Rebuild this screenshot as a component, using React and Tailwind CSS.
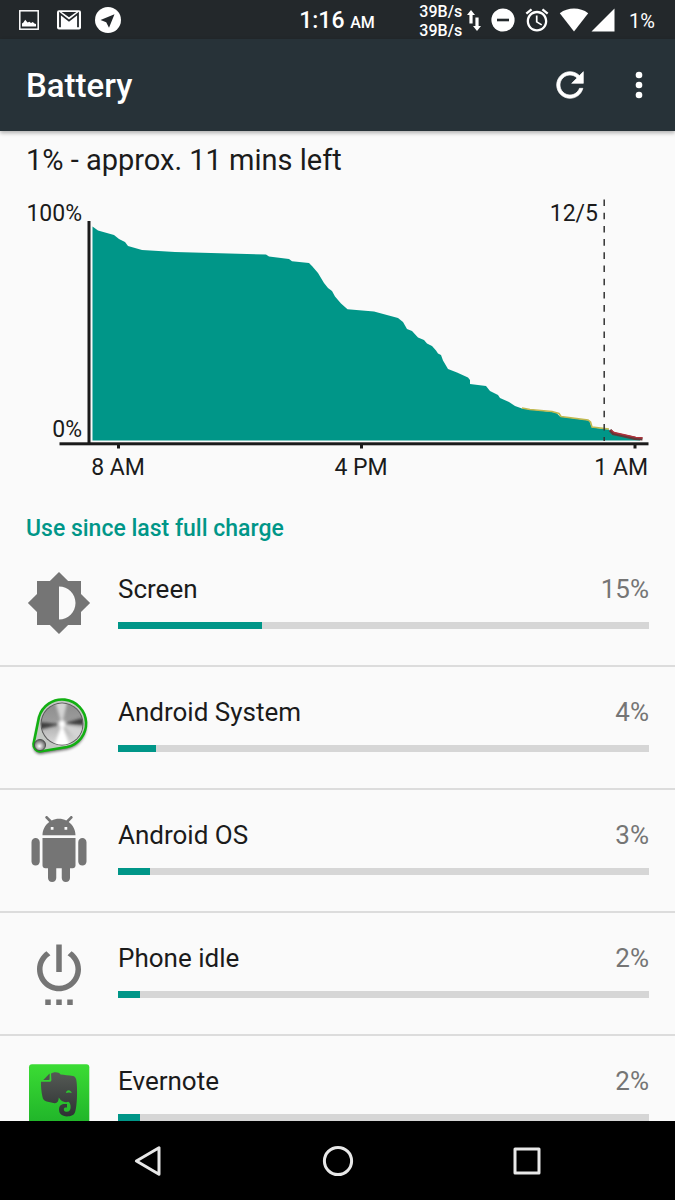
import React from "react";

function ImageIcon() {
  return (
    <svg viewBox="0 0 20 20" className="size-5" aria-hidden="true">
      <rect x="0.8" y="0.8" width="18.4" height="18.4" fill="none" stroke="#fff" strokeWidth="1.5" />
      <path d="M3 16.6V13.4L4.4 12.6L6.2 9.8L8.6 12.6L10.4 11.8L12 13L13.8 12L15.4 13.4L17 14V16.6Z" fill="#fff" />
    </svg>
  );
}

function MailIcon() {
  return (
    <svg viewBox="0 0 24 20" className="h-5 w-6" aria-hidden="true">
      <rect x="0" y="0.3" width="24" height="19.2" rx="2" fill="#fff" />
      <path d="M3 17.2V3.6L12 10.6L21 3.6V17.2" fill="none" stroke="#23282b" strokeWidth="1.8" />
      <path d="M4.6 2H19.4L12 7.2Z" fill="#23282b" />
    </svg>
  );
}

function CompassIcon() {
  return (
    <svg viewBox="0 0 26 26" className="size-[26px]" aria-hidden="true">
      <circle cx="13" cy="13" r="13" fill="#fff" />
      <path d="M19.5 7.2L5.5 13L11.2 15.2L14 20.8Z" fill="#23282b" />
    </svg>
  );
}

function StatusBar() {
  return (
    <header className="grid h-[39px] shrink-0 grid-cols-[1fr_auto_1fr] items-center bg-[#23282b] pl-[19px] pr-5 text-white">
      <div className="flex items-center">
        <ImageIcon />
        <span className="ml-[18px]"><MailIcon /></span>
        <span className="ml-[14px]"><CompassIcon /></span>
      </div>
      <p className="whitespace-nowrap pt-[2px] text-[23px] font-medium leading-9">
        1:16 <span className="text-base">AM</span>
      </p>
      <div className="flex items-center justify-end">
        <p className="pt-[2px] text-base font-medium leading-[19px]">
          39B/s
          <br />
          39B/s
        </p>
        <svg viewBox="0 0 14 21" className="ml-[5px] h-[21px] w-[14px]" fill="#fff" aria-hidden="true">
          <path d="M4 0L8 5H5.6V13.5H2.4V5H0Z" />
          <path d="M10 21L6 16H8.4V7.5H11.6V16H14Z" />
        </svg>
        <svg viewBox="0 0 24 24" className="ml-[10px] size-6" aria-hidden="true">
          <circle cx="12" cy="12" r="11.6" fill="#fff" />
          <rect x="6" y="10.7" width="12" height="2.6" fill="#23282b" />
        </svg>
        <svg viewBox="1.5 1.5 21 21" className="ml-[10px] size-6" fill="#fff" aria-hidden="true">
          <path d="M22 5.72l-4.6-3.86-1.29 1.53 4.6 3.86L22 5.72zM7.88 3.39L6.6 1.86 2 5.71l1.29 1.53 4.59-3.85zM12.5 8H11v6l4.75 2.85.75-1.23-4-2.37V8zM12 4c-4.97 0-9 4.03-9 9s4.02 9 9 9c4.97 0 9-4.03 9-9s-4.03-9-9-9zm0 16c-3.87 0-7-3.13-7-7s3.13-7 7-7 7 3.13 7 7-3.13 7-7 7z" />
        </svg>
        <svg viewBox="0 0 30 24" className="ml-[10px] h-6 w-[30px]" fill="#fff" aria-hidden="true">
          <path d="M15 23.5L0.8 5.2C5 2 9.8 0.5 15 0.5S25 2 29.2 5.2Z" />
        </svg>
        <svg viewBox="0 0 24 24" className="ml-[2px] size-6" fill="#fff" aria-hidden="true">
          <path d="M23.5 0.5V23.5H0.5Z" />
        </svg>
        <span className="ml-[14px] pt-[2px] text-[20px] leading-6">1%</span>
      </div>
    </header>
  );
}

function AppBar() {
  return (
    <div className="z-10 flex h-[92px] shrink-0 items-center bg-[#273238] pl-[26px] pr-4 text-white shadow-[0_2px_4px_rgba(0,0,0,0.3)]">
      <h1 className="flex-1 pt-[2px] text-[33px] font-medium leading-10">Battery</h1>
      <button type="button" aria-label="Refresh" className="mr-[29px]">
        <svg viewBox="0 0 24 24" className="size-[40px]" fill="#fff" stroke="#fff" strokeWidth="0.4" aria-hidden="true">
          <path d="M17.65 6.35C16.2 4.9 14.21 4 12 4c-4.42 0-7.99 3.58-7.99 8s3.57 8 7.99 8c3.73 0 6.84-2.55 7.73-6h-2.08c-.82 2.33-3.04 4-5.65 4-3.31 0-6-2.69-6-6s2.69-6 6-6c1.66 0 3.14.69 4.22 1.78L13 11h7V4l-2.35 2.35z" />
        </svg>
      </button>
      <button type="button" aria-label="More options">
        <svg viewBox="0 0 24 24" className="size-[40px]" fill="#fff" aria-hidden="true">
          <circle cx="12" cy="6" r="2" />
          <circle cx="12" cy="12" r="2" />
          <circle cx="12" cy="18" r="2" />
        </svg>
      </button>
    </div>
  );
}

function BatteryChart() {
  return (
    <svg
      viewBox="0 0 675 300"
      className="block w-full text-[23px]"
      fill="#1b1b1b"
      role="img"
      aria-label="Battery level over time"
    >
      <path
        fill="#009688"
        d="M92.5 36.5L98 40.5L114 45L119 49L125 52L128 56L135 58L142 60L175 62L266 64.5L269 66.5L289 69L292 71.3L309 73L312 76L318 83L324 93L328 98L332 101L335 106.5L341 113.5L347.5 119.3L374 121.5L398 128L403 132L407 139L412 141L418 147.5L424 150L427 153.5L432 156L436 160.5L438 163.5L441 165L443 170.5L448 179L457 182.5L468 187.5L470 190V194L486 196L490 201L498 205L500 208L509 212L515 216L522 218.5L556 222.5L560 226.5L589 230.5L592 237.5L609 239.5L612 244.5L640 248.5V250.5H92.5Z"
      />
      <path
        fill="none"
        stroke="#c0b84f"
        strokeWidth="1.6"
        d="M522 218L530 219.5L552 221.5L559 223.5L561 226.5L588 230L590.5 232L592 237L609 239"
      />
      <path fill="none" stroke="#5f3a3a" strokeWidth="3.2" d="M610 240L613 243.5L622 245.5L635 248.3L642.5 248.8" />
      <path fill="none" stroke="#b0303a" strokeWidth="1.4" d="M611 240L614 242.5L624 244.8L636 247.4L642.5 248" />
      <path stroke="#333" strokeWidth="1.5" strokeDasharray="6.6 6.6" d="M604.2 9.5V251" />
      <rect x="87.5" y="31" width="3" height="222" />
      <rect x="59.5" y="252.3" width="589" height="3" />
      <rect x="117" y="254" width="3" height="4.5" />
      <rect x="360" y="254" width="3" height="4.5" />
      <rect x="633.5" y="254" width="3" height="4.5" />
      <text x="82" y="31" textAnchor="end">100%</text>
      <text x="82" y="247" textAnchor="end">0%</text>
      <text x="598" y="31" textAnchor="end">12/5</text>
      <text x="118" y="285" textAnchor="middle">8 AM</text>
      <text x="361" y="285" textAnchor="middle">4 PM</text>
      <text x="648" y="285" textAnchor="end">1 AM</text>
    </svg>
  );
}

function MaterialIcon({ d }) {
  return (
    <svg viewBox="0 0 24 24" className="size-[66px]" fill="#757575" aria-hidden="true">
      <path d={d} />
    </svg>
  );
}

const BRIGHTNESS =
  "M20 15.31L23.31 12 20 8.69V4h-4.69L12 .69 8.69 4H4v4.69L.69 12 4 15.31V20h4.69L12 23.31 15.31 20H20v-4.69zM12 18V6c3.31 0 6 2.69 6 6s-2.69 6-6 6z";
const ANDROID =
  "M6 18c0 .55.45 1 1 1h1v3.5c0 .83.67 1.5 1.5 1.5s1.5-.67 1.5-1.5V19h2v3.5c0 .83.67 1.5 1.5 1.5s1.5-.67 1.5-1.5V19h1c.55 0 1-.45 1-1V8H6v10zM3.5 8C2.67 8 2 8.67 2 9.5v7c0 .83.67 1.5 1.5 1.5S5 17.33 5 16.5v-7C5 8.67 4.33 8 3.5 8zm17 0c-.83 0-1.5.67-1.5 1.5v7c0 .83.67 1.5 1.5 1.5s1.5-.67 1.5-1.5v-7c0-.83-.67-1.5-1.5-1.5zm-4.97-5.84l1.3-1.3c.2-.2.2-.51 0-.71-.2-.2-.51-.2-.71 0l-1.48 1.48C13.85 1.23 12.95 1 12 1c-.96 0-1.86.23-2.66.63L7.85.15c-.2-.2-.51-.2-.71 0-.2.2-.2.51 0 .71l1.31 1.31C6.97 3.26 6 5.01 6 7h12c0-1.99-.97-3.75-2.47-4.84zM10 5H9V4h1v1zm5 0h-1V4h1v1z";
const POWER =
  "M7 24h2v-2H7v2zm4 0h2v-2h-2v2zm2-22h-2v10h2V2zm3.56 2.44l-1.45 1.45C16.84 6.94 18 8.83 18 11c0 3.31-2.69 6-6 6s-6-2.69-6-6c0-2.17 1.16-4.06 2.88-5.12L7.44 4.44C5.36 5.88 4 8.28 4 11c0 4.42 3.58 8 8 8s8-3.58 8-8c0-2.72-1.36-5.12-3.44-6.56zM15 24h2v-2h-2v2z";

function KnobIcon() {
  return (
    <svg viewBox="0 0 66 66" className="size-[66px]" aria-hidden="true">
      <defs>
        <filter id="soft" x="-30%" y="-30%" width="160%" height="160%">
          <feGaussianBlur stdDeviation="1.8" />
        </filter>
        <clipPath id="disc">
          <circle cx="36" cy="31" r="20.5" />
        </clipPath>
        <linearGradient id="metal" x1="0" y1="0" x2="0" y2="1">
          <stop offset="0" stopColor="#8c8c8c" />
          <stop offset="0.4" stopColor="#9a9a9a" />
          <stop offset="0.6" stopColor="#b8b8b8" />
          <stop offset="1" stopColor="#dedede" />
        </linearGradient>
        <radialGradient id="small" cx="0.45" cy="0.6" r="0.6">
          <stop offset="0" stopColor="#ffffff" />
          <stop offset="1" stopColor="#555" />
        </radialGradient>
      </defs>
      <path
        d="M13 24L7.5 51A7 7 0 0 0 14 58.5L41 54A24 24 0 1 0 13 24Z"
        transform="translate(0 2.5)"
        fill="#000"
        opacity="0.6"
        filter="url(#soft)"
      />
      <path
        d="M13 24L7.5 51A7 7 0 0 0 14 58.5L41 54A24 24 0 1 0 13 24Z"
        fill="#c4c8c4"
        stroke="#12b012"
        strokeWidth="2.6"
      />
      <circle cx="36" cy="31" r="21.5" fill="#5c5c5c" />
      <g clipPath="url(#disc)">
        <rect x="14" y="9" width="44" height="44" fill="url(#metal)" />
        <g filter="url(#soft)">
          <path d="M36 31L12 29V37Z" fill="#3c3c3c" />
          <path d="M36 31L60 24V32Z" fill="#3c3c3c" />
          <path d="M36 31L28 6H42Z" fill="#d4d4d4" />
          <path d="M36 31L27 56H45Z" fill="#ffffff" />
          <path d="M36 31L60 36L54 50Z" fill="#d4d4d4" />
          <circle cx="36" cy="31" r="3.4" fill="#fff" />
        </g>
      </g>
      <circle cx="14" cy="52" r="5.6" fill="url(#small)" stroke="#444" strokeWidth="0.8" />
    </svg>
  );
}

function ElephantIcon() {
  return (
    <svg viewBox="0 0 66 66" className="size-[66px]" aria-hidden="true">
      <defs>
        <linearGradient id="leaf" x1="0" y1="0" x2="0" y2="1">
          <stop offset="0" stopColor="#3bdc34" />
          <stop offset="1" stopColor="#1fb329" />
        </linearGradient>
        <linearGradient id="hide" x1="0" y1="0" x2="0" y2="1">
          <stop offset="0" stopColor="#555a55" />
          <stop offset="1" stopColor="#2e3233" />
        </linearGradient>
      </defs>
      <rect x="3" y="2.3" width="60.3" height="61" rx="3" fill="url(#leaf)" />
      <g fill="url(#hide)">
        <path d="M17.3 18L23.6 11.6V17Q23.6 18 22.6 18Z" fill="#4d524d" />
        <path d="M25 11.8C27 9.8 33 9.6 34.6 12.6C38 13.2 43 13.2 47 14C50 14.6 50.6 18 50.8 22C51.4 31 51 43 49.4 49C48.4 53.4 45 54.4 41 54.4C36 54.4 33 52 33 47.6C33 43.6 35.6 42 38.6 42H41V45.6H39.2C37.4 45.6 37.2 49.6 40 49.8C43.4 50 44.6 48 44.6 45C44.6 42.4 43.8 40.6 42.4 39.8C38.6 40.8 35 39.6 32.8 35.6C32.6 39.6 31.2 41.4 28.6 41.2L20.6 39.6C18 38.8 17 37.6 16.4 34.6C15.4 30 14.8 24 15 19.8H24Q25.4 19.8 25.4 18Z" />
      </g>
      <path d="M40 31C40.2 27.6 44.4 27 45.8 31Q43 29.8 40 31Z" fill="#2cc62e" />
    </svg>
  );
}

const USAGE = [
  { name: "Screen", percent: 15, bar: 27.1, icon: <MaterialIcon d={BRIGHTNESS} /> },
  { name: "Android System", percent: 4, bar: 7.1, icon: <KnobIcon /> },
  { name: "Android OS", percent: 3, bar: 6, icon: <MaterialIcon d={ANDROID} /> },
  { name: "Phone idle", percent: 2, bar: 4.1, icon: <MaterialIcon d={POWER} /> },
  { name: "Evernote", percent: 2, bar: 4.1, icon: <ElephantIcon /> },
];

function UsageRow({ item }) {
  return (
    <li className="flex items-start gap-[26px] border-b-2 border-[#dcdcdc] px-[26px] pb-9 pt-[29px]">
      <div className="-mt-[3px] h-[58px] shrink-0">{item.icon}</div>
      <div className="min-w-0 flex-1">
        <div className="flex justify-between text-[26px] leading-8">
          <span>{item.name}</span>
          <span className="text-[#757575]">{item.percent}%</span>
        </div>
        <div className="mt-[17px] h-[7px] bg-[#d6d6d6]">
          <div className="h-full bg-[#009688]" style={{ width: `${item.bar}%` }} />
        </div>
      </div>
    </li>
  );
}

function NavBar() {
  return (
    <nav className="flex h-[79px] shrink-0 items-center justify-center bg-black">
      <button type="button" aria-label="Back" className="flex w-[28%] justify-center">
        <svg viewBox="0 0 32 32" className="size-8" fill="none" stroke="#e8e8e8" strokeWidth="3" strokeLinejoin="round" aria-hidden="true">
          <path d="M26 2.8V29.2L3.4 16Z" />
        </svg>
      </button>
      <button type="button" aria-label="Home" className="flex w-[28%] justify-center">
        <svg viewBox="0 0 32 32" className="size-8" fill="none" stroke="#e8e8e8" strokeWidth="3" aria-hidden="true">
          <circle cx="16" cy="16" r="13.6" />
        </svg>
      </button>
      <button type="button" aria-label="Recent apps" className="flex w-[28%] justify-center">
        <svg viewBox="0 0 32 32" className="size-8" fill="none" stroke="#e8e8e8" strokeWidth="3" strokeLinejoin="round" aria-hidden="true">
          <rect x="4" y="4" width="24" height="24" />
        </svg>
      </button>
    </nav>
  );
}

export default function App() {
  return (
    <div className="flex h-screen flex-col bg-[#fafafa] font-['Roboto',sans-serif] text-[#1b1b1b]">
      <StatusBar />
      <AppBar />
      <main className="min-h-0 flex-1 overflow-y-auto [scrollbar-width:none]">
        <p className="px-[26px] pt-[9px] text-[29px] leading-10">1% - approx. 11 mins left</p>
        <div className="mt-[10px]">
          <BatteryChart />
        </div>
        <h2 className="mt-6 px-[26px] text-[23px] font-medium leading-[30px] text-[#009688]">
          Use since last full charge
        </h2>
        <ul>
          {USAGE.map((item) => (
            <UsageRow key={item.name} item={item} />
          ))}
        </ul>
      </main>
      <NavBar />
    </div>
  );
}
